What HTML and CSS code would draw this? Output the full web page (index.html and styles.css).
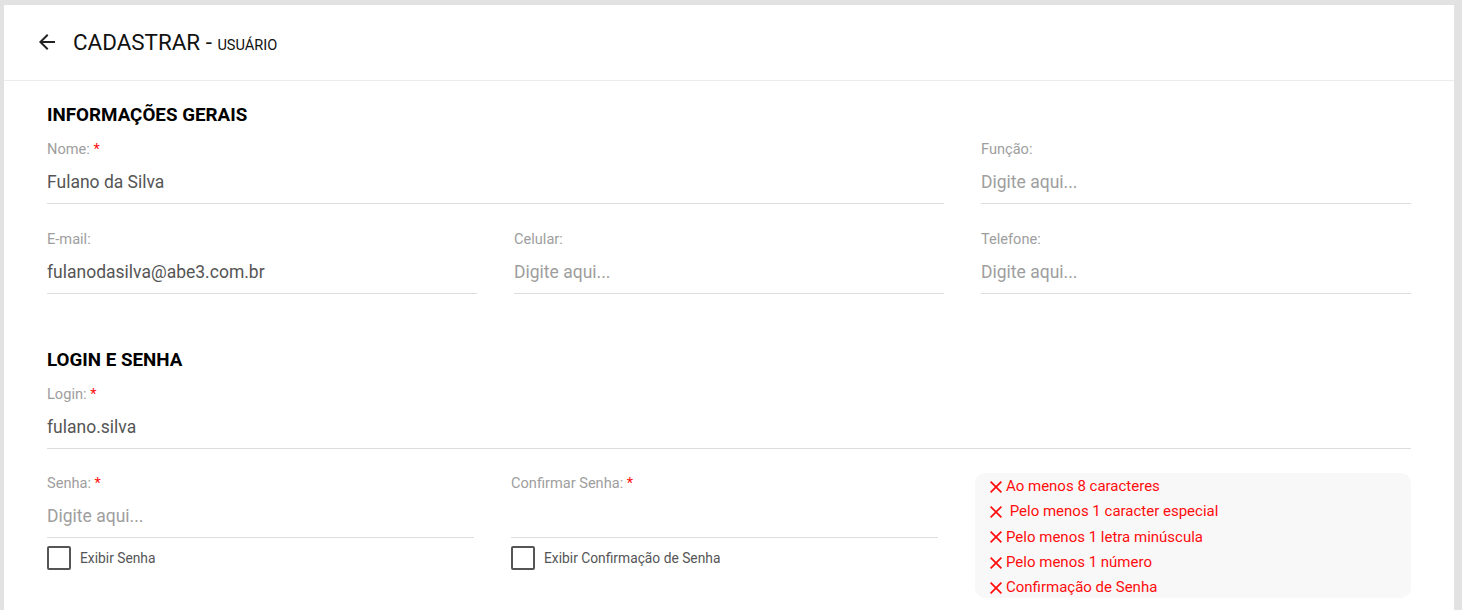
FILE: index.html
```html
<!DOCTYPE html>
<html lang="pt-BR">
<head>
    <meta charset="UTF-8">
    <title>Cadastrar - Usuário</title>
    <link rel="stylesheet" href="styles.css">
</head>
<body>
    <div class="card">
        <div class="card-header">
            <button class="back-btn" aria-label="Voltar">
                <svg viewBox="0 0 24 24" width="24" height="24"><path d="M20 11H7.83l5.59-5.59L12 4l-8 8 8 8 1.41-1.41L7.83 13H20v-2z" fill="#222"/></svg>
            </button>
            <h1>CADASTRAR - <small>Usuário</small></h1>
        </div>

        <div class="card-body">
            <!-- Informações gerais -->
            <h2 class="section-title">INFORMAÇÕES GERAIS</h2>
            <div class="form-grid">
                <div class="field span-2">
                    <label>Nome: <span class="req">*</span></label>
                    <input type="text" value="Fulano da Silva">
                </div>
                <div class="field">
                    <label>Função:</label>
                    <input type="text" placeholder="Digite aqui...">
                </div>
                <div class="field">
                    <label>E-mail:</label>
                    <input type="text" value="fulanodasilva@abe3.com.br">
                </div>
                <div class="field">
                    <label>Celular:</label>
                    <input type="text" placeholder="Digite aqui...">
                </div>
                <div class="field">
                    <label>Telefone:</label>
                    <input type="text" placeholder="Digite aqui...">
                </div>
            </div>

            <!-- Login e senha -->
            <h2 class="section-title second">LOGIN E SENHA</h2>
            <div class="field">
                <label>Login: <span class="req">*</span></label>
                <input type="text" value="fulano.silva">
            </div>

            <div class="password-grid">
                <div>
                    <div class="field">
                        <label>Senha: <span class="req">*</span></label>
                        <input type="password" placeholder="Digite aqui...">
                    </div>
                    <label class="check">
                        <input type="checkbox">
                        <span class="box"></span>
                        Exibir Senha
                    </label>
                </div>
                <div>
                    <div class="field">
                        <label>Confirmar Senha: <span class="req">*</span></label>
                        <input type="password">
                    </div>
                    <label class="check">
                        <input type="checkbox">
                        <span class="box"></span>
                        Exibir Confirmação de Senha
                    </label>
                </div>
                <ul class="rules">
                    <li><svg viewBox="5 5 14 14"><path d="M19 6.41 17.59 5 12 10.59 6.41 5 5 6.41 10.59 12 5 17.59 6.41 19 12 13.41 17.59 19 19 17.59 13.41 12z"/></svg>Ao menos 8 caracteres</li>
                    <li><svg viewBox="5 5 14 14"><path d="M19 6.41 17.59 5 12 10.59 6.41 5 5 6.41 10.59 12 5 17.59 6.41 19 12 13.41 17.59 19 19 17.59 13.41 12z"/></svg>&nbsp;Pelo menos 1 caracter especial</li>
                    <li><svg viewBox="5 5 14 14"><path d="M19 6.41 17.59 5 12 10.59 6.41 5 5 6.41 10.59 12 5 17.59 6.41 19 12 13.41 17.59 19 19 17.59 13.41 12z"/></svg>Pelo menos 1 letra minúscula</li>
                    <li><svg viewBox="5 5 14 14"><path d="M19 6.41 17.59 5 12 10.59 6.41 5 5 6.41 10.59 12 5 17.59 6.41 19 12 13.41 17.59 19 19 17.59 13.41 12z"/></svg>Pelo menos 1 número</li>
                    <li><svg viewBox="5 5 14 14"><path d="M19 6.41 17.59 5 12 10.59 6.41 5 5 6.41 10.59 12 5 17.59 6.41 19 12 13.41 17.59 19 19 17.59 13.41 12z"/></svg>Confirmação de Senha</li>
                </ul>
            </div>
        </div>
    </div>
</body>
</html>
```

FILE: styles.css
```css
* {
    margin: 0;
    padding: 0;
    box-sizing: border-box;
}

:root {
    --label-color: #9e9e9e;
    --value-color: #555;
    --line-color: #ddd;
    --danger-color: #ff0d0d;
}

body {
    font-family: Roboto, 'Liberation Sans', sans-serif;
    background: #e2e2e2;
    padding: 5px 8px 0 4px;
    height: 100vh;
    overflow: hidden;
}

/* Card */
.card {
    background: #fff;
    min-height: 100%;
}

.card-header {
    display: flex;
    align-items: center;
    height: 76px;
    padding: 0 31px 1px;
    border-bottom: 1px solid #ececec;
}

.back-btn {
    background: none;
    border: none;
    width: 24px;
    height: 24px;
    display: flex;
    cursor: pointer;
}

.card-header h1 {
    margin-left: 14px;
    font-size: 22.4px;
    font-weight: 400;
    color: #111;
    line-height: 1;
}

.card-header h1 small {
    font-size: 14.6px;
    text-transform: uppercase;
}

.card-body {
    padding: 23px 43px 0;
}

/* Sections */
.section-title {
    font-size: 18.8px;
    font-weight: 700;
    line-height: 22px;
    color: #000;
    margin-bottom: 13px;
}

.section-title.second {
    margin-top: 55px;
}

.form-grid {
    display: grid;
    grid-template-columns: repeat(3, 1fr);
    column-gap: 37px;
    row-gap: 25px;
}

.span-2 {
    grid-column: span 2;
}

/* Fields */
.field label {
    display: block;
    font-size: 14.6px;
    line-height: 20px;
    color: var(--label-color);
}

.req {
    color: var(--danger-color);
}

.field input {
    display: block;
    width: 100%;
    height: 45px;
    padding-top: 2px;
    border: none;
    border-bottom: 1px solid var(--line-color);
    font-family: inherit;
    font-size: 17.5px;
    color: var(--value-color);
    outline: none;
    background: transparent;
}

.field input::placeholder {
    color: var(--label-color);
}

/* Password row */
.password-grid {
    display: grid;
    grid-template-columns: 427px 427px 1fr;
    column-gap: 37px;
    margin-top: 24px;
}

.check {
    display: flex;
    align-items: center;
    gap: 9px;
    margin-top: 8px;
    font-size: 13.8px;
    color: var(--value-color);
    cursor: pointer;
}

.check input {
    display: none;
}

.check .box {
    width: 24px;
    height: 24px;
    border: 2px solid #555;
    border-radius: 2px;
}

/* Password rules */
.rules {
    list-style: none;
    background: #f8f8f8;
    border-radius: 10px;
    padding: 1px 15px 0;
    height: 125px;
}

.rules li {
    display: flex;
    align-items: center;
    font-size: 15px;
    line-height: 25.3px;
    color: var(--danger-color);
}

.rules svg {
    width: 12px;
    height: 12px;
    margin-right: 4px;
    fill: var(--danger-color);
}
```
